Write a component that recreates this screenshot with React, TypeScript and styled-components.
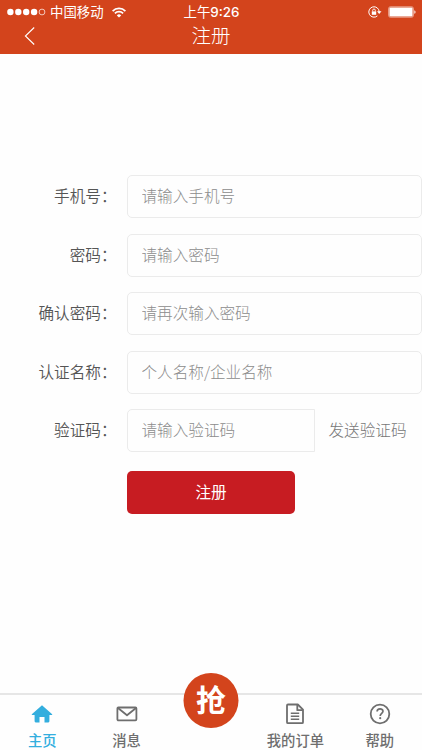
import React from "react";
import styled, { createGlobalStyle } from "styled-components";

const GlobalStyle = createGlobalStyle`
  *, *::before, *::after { box-sizing: border-box; }
  html, body { margin: 0; padding: 0; background: #fefefe; }
  body, input, button { font-family: "Noto Sans CJK SC", sans-serif; }
`;

const Screen = styled.div`
  width: 422px;
  height: 750px;
  display: flex;
  flex-direction: column;
  overflow: hidden;
  background: #fefefe;
`;

const Header = styled.header`
  height: 54px;
  flex: none;
  background: #d3441c;
  color: #fff;
`;

const StatusBar = styled.div`
  height: 24px;
  display: grid;
  grid-template-columns: 1fr auto 1fr;
  align-items: center;
  padding: 0 6px 0 7px;
`;

const Carrier = styled.div`
  display: flex;
  align-items: center;
  font-size: 13.4px;
  line-height: 22px;
  svg { display: block; }
  span { margin: 0 8px 2px 4px; }
`;

const Clock = styled.div`
  font-size: 13.4px;
  line-height: 22px;
  padding-bottom: 1px;
  span {
    font-family: Inter, sans-serif;
    font-size: 13.4px;
    font-weight: 500;
  }
`;

const Indicators = styled.div`
  display: flex;
  justify-content: flex-end;
  align-items: center;
  gap: 6px;
`;

const NavBar = styled.div`
  height: 30px;
  display: grid;
  grid-template-columns: 60px 1fr 60px;
  grid-template-rows: 30px;
`;

const BackButton = styled.button`
  height: 30px;
  display: flex;
  align-items: flex-start;
  padding: 3px 0 0 24px;
  border: 0;
  background: none;
`;

const Title = styled.h1`
  margin: 0;
  font-size: 19.5px;
  line-height: 22px;
  font-weight: 300;
  text-align: center;
`;

const Form = styled.form`
  flex: 1;
  display: flex;
  flex-direction: column;
  gap: 15.5px;
  padding-top: 121px;
`;

const Field = styled.div`
  height: 43px;
  display: grid;
  grid-template-columns: 127px 1fr;
  align-items: center;
`;

const Label = styled.label`
  padding: 0 10.5px 3px 0;
  font-size: 15.6px;
  line-height: 40px;
  font-weight: 350;
  text-align: right;
  color: #555;
`;

const Input = styled.input<{ $joined?: boolean }>`
  width: ${(p) => (p.$joined ? "188px" : "295px")};
  height: 43px;
  padding: 0 14px 3px 13.5px;
  border: 1.5px solid #ebebeb;
  border-radius: ${(p) => (p.$joined ? "5px 0 0 5px" : "5px")};
  background: #fefefe;
  font-size: 15.6px;
  font-weight: 300;
  outline: none;
  &::placeholder { color: #8c8c8c; opacity: 1; }
`;

const CodeGroup = styled.div`
  display: flex;
  align-items: center;
`;

const SendCode = styled.button`
  padding: 0 0 3px 13.5px;
  border: 0;
  background: none;
  color: #777;
  font-size: 15.6px;
  font-weight: 300;
  line-height: 40px;
`;

const Submit = styled.button`
  width: 168px;
  height: 43px;
  margin: 3.5px 0 0 127px;
  padding: 0 0 3px;
  border: 0;
  border-radius: 5px;
  background: #c71c22;
  color: #fff;
  font-size: 15.6px;
  font-weight: 400;
`;

const TabBar = styled.nav`
  position: relative;
  height: 57px;
  flex: none;
  display: grid;
  grid-template-columns: repeat(5, 1fr);
  border-top: 2px solid #e6e6e6;
`;

const Tab = styled.a<{ $active?: boolean }>`
  display: flex;
  flex-direction: column;
  align-items: center;
  padding-top: 8px;
  color: ${(p) => (p.$active ? "#33aede" : "#6e6e6e")};
  svg { display: block; }
  span {
    margin-top: 5px;
    font-size: 14.3px;
    font-weight: 500;
    line-height: 20px;
    white-space: nowrap;
  }
`;

const GrabButton = styled.button`
  position: absolute;
  left: 50%;
  top: -22px;
  width: 55px;
  height: 55px;
  transform: translateX(-50%);
  padding: 0 0 5px;
  border: 0;
  border-radius: 50%;
  background: #d3441c;
  color: #fff;
  font-size: 30px;
  font-weight: 700;
  line-height: 50px;
`;

const SignalDots = () => (
  <svg width="39" height="8" viewBox="0 0 39 8" fill="#fff">
    {[3.4, 11.3, 19.2, 27.1].map((cx) => <circle key={cx} cx={cx} cy="4" r="3.2" />)}
    <circle cx="35" cy="4" r="2.9" fill="none" stroke="#fff" strokeWidth=".7" />
  </svg>
);

const Wifi = () => (
  <svg width="14" height="11" viewBox="0 0 14 11" fill="none" stroke="#fff" strokeWidth="1.8">
    <path d="M.6 4.1a9.1 9.1 0 0 1 12.8 0M2.9 6.4a5.8 5.8 0 0 1 8.2 0" />
    <path d="M7 10.6 4.8 8.4a3.1 3.1 0 0 1 4.4 0Z" fill="#fff" stroke="none" />
  </svg>
);

const RotationLock = () => (
  <svg width="14" height="12" viewBox="0 0 14 12" fill="none" stroke="#fff">
    <path d="M11.2 6A5.2 5.2 0 1 0 9.4 9.9" strokeWidth="1" />
    <path d="M9 5.3h4.5L11.2 7.9Z" fill="#fff" stroke="none" />
    <rect x="3.8" y="5.4" width="4.4" height="3.4" fill="#fff" stroke="none" />
    <path d="M4.7 5.5V4.3a1.3 1.3 0 0 1 2.6 0v1.2" strokeWidth=".9" />
  </svg>
);

const Battery = () => (
  <svg width="28" height="12" viewBox="0 0 28 12">
    <rect x=".5" y=".7" width="25" height="10.6" rx="2" fill="none" stroke="#fff" strokeOpacity=".65" strokeWidth=".7" />
    <rect x="1.4" y="1.5" width="23.2" height="9" rx="1" fill="#fff" />
    <path d="M26.4 4.2c1.5.5 1.5 3.1 0 3.6Z" fill="#fff" />
  </svg>
);

const HomeIcon = () => (
  <svg width="22" height="22" viewBox="0 0 22 22" fill="currentColor">
    <path d="M11 2.2.8 11.2q-.4.7.5.7h2.3v6.4q0 1.1 1.1 1.1h3.8v-5.3h5v5.3h3.8q1.1 0 1.1-1.1v-6.4h2.3q.9 0 .5-.7Z" />
  </svg>
);

const MailIcon = () => (
  <svg width="22" height="22" viewBox="0 0 22 22" fill="none" stroke="currentColor" strokeWidth="1.8" strokeLinejoin="round">
    <rect x="1.4" y="4.5" width="19" height="12.8" rx="1" />
    <path d="m2 5 9 7.2L20 5" />
  </svg>
);

const OrderIcon = () => (
  <svg width="22" height="22" viewBox="0 0 22 22" fill="none" stroke="currentColor" strokeWidth="1.8" strokeLinejoin="round">
    <path d="M3 2.5q0-1 1-1h9.8l5.2 5.2v12.5q0 1-1 1H4q-1 0-1-1Z" />
    <path d="M13.3 1.8v5.4h5.5" />
    <path d="M6.8 10.2h8.4M6.8 13.2h8.4M6.8 16.2h8.4" strokeWidth="1.5" />
  </svg>
);

const HelpIcon = () => (
  <svg width="22" height="22" viewBox="0 0 22 22" fill="none" stroke="currentColor" strokeWidth="1.8">
    <circle cx="11" cy="11" r="9.3" />
    <path d="M8.1 8.6c0-3.7 5.9-3.5 5.9-.3 0 2-2.8 2.1-2.8 4.6" strokeWidth="1.7" />
    <circle cx="11.2" cy="15.2" r="1.1" fill="currentColor" stroke="none" />
  </svg>
);

const fields = [
  { id: "phone", label: "手机号", hint: "请输入手机号" },
  { id: "password", label: "密码", hint: "请输入密码" },
  { id: "confirm", label: "确认密码", hint: "请再次输入密码" },
  { id: "name", label: "认证名称", hint: "个人名称/企业名称" },
];

export default function App() {
  return (
    <Screen>
      <GlobalStyle />
      <Header>
        <StatusBar>
          <Carrier>
            <SignalDots />
            <span>中国移动</span>
            <Wifi />
          </Carrier>
          <Clock>上午<span>9:26</span></Clock>
          <Indicators>
            <RotationLock />
            <Battery />
          </Indicators>
        </StatusBar>
        <NavBar>
          <BackButton type="button" aria-label="返回">
            <svg width="12" height="18" viewBox="0 0 12 18" fill="none" stroke="#fff" strokeWidth="1.1">
              <path d="M10.2.5 1.4 9l8.8 8.5" />
            </svg>
          </BackButton>
          <Title>注册</Title>
        </NavBar>
      </Header>
      <Form>
        {fields.map((f) => (
          <Field key={f.id}>
            <Label htmlFor={f.id}>{f.label}：</Label>
            <Input id={f.id} placeholder={f.hint} />
          </Field>
        ))}
        <Field>
          <Label htmlFor="code">验证码：</Label>
          <CodeGroup>
            <Input id="code" placeholder="请输入验证码" $joined />
            <SendCode type="button">发送验证码</SendCode>
          </CodeGroup>
        </Field>
        <Submit type="button">注册</Submit>
      </Form>
      <TabBar>
        <Tab $active><HomeIcon /><span>主页</span></Tab>
        <Tab><MailIcon /><span>消息</span></Tab>
        <GrabButton type="button">抢</GrabButton>
        <div />
        <Tab><OrderIcon /><span>我的订单</span></Tab>
        <Tab><HelpIcon /><span>帮助</span></Tab>
      </TabBar>
    </Screen>
  );
}
